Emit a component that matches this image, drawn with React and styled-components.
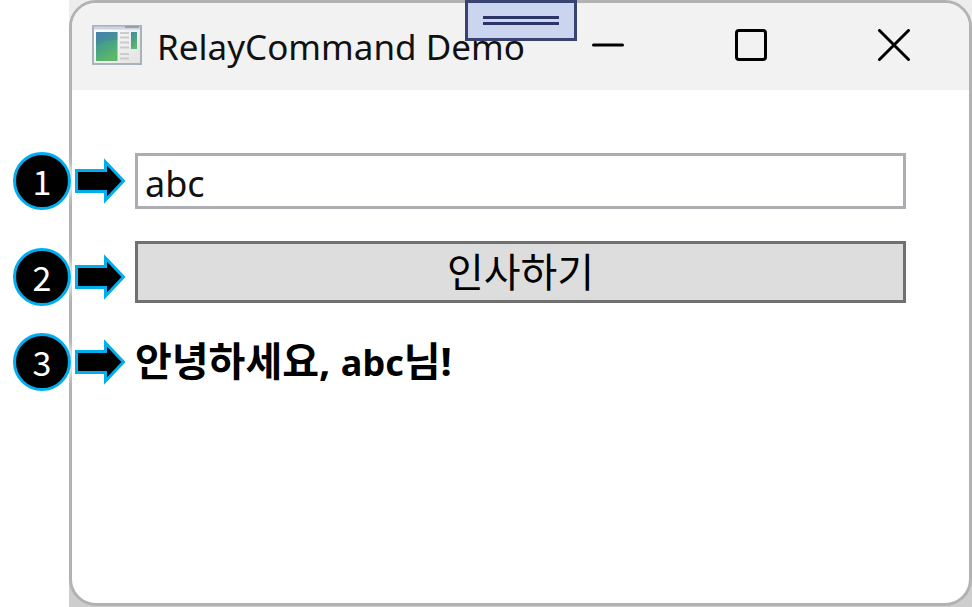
import React, { useState } from "react";
import styled, { createGlobalStyle } from "styled-components";

function App() {
  const [name, setName] = useState("abc");
  const [greeted, setGreeted] = useState("abc");

  return (
    <Desktop>
      <GlobalStyle />
      <Window>
        <TitleBar>
          <AppIcon />
          <Title>RelayCommand Demo</Title>
          <CaptionButton aria-label="Minimize">
            <svg width="32" height="32" viewBox="0 0 32 32">
              <path d="M1.5 16H30.5" />
            </svg>
          </CaptionButton>
          <CaptionButton aria-label="Maximize">
            <svg width="32" height="32" viewBox="0 0 32 32">
              <rect x="1.5" y="1.5" width="29" height="29" rx="2.5" />
            </svg>
          </CaptionButton>
          <CaptionButton aria-label="Close">
            <svg width="32" height="32" viewBox="0 0 32 32">
              <path d="M1.5 1.5L30.5 30.5M30.5 1.5L1.5 30.5" />
            </svg>
          </CaptionButton>
        </TitleBar>
        <DebugHandle aria-label="Debug toolbar">
          <HandleLine />
          <HandleLine />
        </DebugHandle>
        <Content>
          <Row>
            <Callout number={1} />
            <NameInput
              type="text"
              aria-label="이름"
              value={name}
              onChange={(e) => setName(e.target.value)}
            />
          </Row>
          <Row $space={10}>
            <Callout number={2} />
            <GreetButton onClick={() => setGreeted(name)}>인사하기</GreetButton>
          </Row>
          <Row>
            <Callout number={3} />
            <Greeting>
              안녕하세요, <GreetedName>{greeted}</GreetedName>님!
            </Greeting>
          </Row>
        </Content>
      </Window>
    </Desktop>
  );
}

function Callout({ number }) {
  return (
    <CalloutBox>
      <Badge>{number}</Badge>
      <svg width="51" height="46" viewBox="0 0 51 46">
        <path
          d="M1.5 12.5H30.5V4L48.5 23L30.5 42V33.5H1.5Z"
          fill="#000"
          stroke="#00aeef"
          strokeWidth="3"
        />
      </svg>
    </CalloutBox>
  );
}

function AppIcon() {
  return (
    <svg width="50" height="40" viewBox="0 0 50 40">
      <defs>
        <linearGradient id="pane" x1="0" y1="0" x2="0.4" y2="1">
          <stop offset="0" stopColor="#4b86a8" />
          <stop offset="0.5" stopColor="#45a088" />
          <stop offset="1" stopColor="#5cb768" />
        </linearGradient>
        <linearGradient id="paper" x1="0" y1="0" x2="1" y2="1">
          <stop offset="0" stopColor="#fff" />
          <stop offset="1" stopColor="#e2e2e2" />
        </linearGradient>
      </defs>
      <rect x="1" y="1" width="48" height="38" fill="url(#paper)" stroke="#a9b1ba" strokeWidth="2" />
      <path d="M2 3H48" stroke="#cbd4df" strokeWidth="3" />
      <path d="M33 2H47" stroke="#8793a1" strokeWidth="1.5" />
      <rect x="4" y="7" width="21.5" height="29" fill="url(#pane)" />
      <path d="M4 21Q12 14 25.5 15V7H4Z" fill="#4179b0" opacity="0.35" />
      <rect x="39" y="7" width="6" height="17" fill="url(#pane)" />
      <path
        d="M28 8H37M28 12.5H37M28 17.5H37M28 22.5H37M28 29H37M28 33.5H37"
        stroke="#cbcbcb"
        strokeWidth="2"
      />
    </svg>
  );
}

const GlobalStyle = createGlobalStyle`
  * {
    box-sizing: border-box;
  }

  body {
    margin: 0;
    background: #fff;
    color: #111;
    font-family: "Noto Sans", "Noto Sans CJK KR", sans-serif;
  }
`;

const Desktop = styled.div`
  min-height: 100vh;
  margin-left: 69px;
  padding-bottom: 1px;
  display: flex;
  background: linear-gradient(#ededed, #cdcdcd);
`;

const Window = styled.main`
  position: relative;
  flex: 1;
  border: 3px solid #b2b2b2;
  border-radius: 27px;
  background: #fff;
`;

const TitleBar = styled.header`
  height: 87px;
  display: flex;
  align-items: center;
  padding: 0 4px 3px 20px;
  border-radius: 24px 24px 0 0;
  background: #f2f2f2;
`;

const Title = styled.h1`
  flex: 1;
  margin: 0;
  padding: 4px 0 0 15px;
  font-size: 35px;
  font-weight: 400;
  line-height: 48px;
  white-space: nowrap;
`;

const CaptionButton = styled.button`
  width: 143px;
  height: 84px;
  flex: none;
  display: flex;
  align-items: center;
  justify-content: center;
  padding: 0;
  border: 0;
  background: none;

  svg {
    fill: none;
    stroke: #000;
    stroke-width: 3;
    stroke-linecap: round;
  }
`;

/* hangs from the top edge, over the title bar */
const DebugHandle = styled.button`
  position: absolute;
  top: -3px;
  left: 50%;
  transform: translateX(-50%);
  width: 112px;
  height: 41px;
  display: flex;
  flex-direction: column;
  align-items: center;
  justify-content: center;
  gap: 3px;
  padding: 0;
  border: 3px solid #39436f;
  background: #ccd5f0;
`;

const HandleLine = styled.span`
  width: 76px;
  height: 3px;
  background: #2b3566;
`;

const Content = styled.section`
  display: flex;
  flex-direction: column;
  gap: 32px;
  padding: 63px;
`;

const Row = styled.div`
  position: relative;
  display: flex;
  padding-bottom: ${(props) => props.$space || 0}px;
`;

/* sits left of its row, across the window edge */
const CalloutBox = styled.div`
  position: absolute;
  right: 100%;
  top: 50%;
  transform: translateY(-50%);
  display: flex;
  align-items: center;
  gap: 4px;
  margin-right: 9px;
`;

const Badge = styled.span`
  width: 58px;
  height: 58px;
  display: flex;
  align-items: center;
  justify-content: center;
  border: 3px solid #00aeef;
  border-radius: 50%;
  background: #000;
  box-shadow: 0 0 6px 2px #fff;
  color: #fff;
  font-family: "Noto Sans CJK KR", sans-serif;
  font-size: 34px;
  line-height: 40px;
`;

const NameInput = styled.input`
  width: 100%;
  height: 56px;
  padding: 4px 7px 0;
  border: 3px solid #abadb3;
  background: #fff;
  color: #111;
  font-family: inherit;
  font-size: 36px;
  outline: none;
`;

const GreetButton = styled.button`
  width: 100%;
  height: 62px;
  padding: 0;
  border: 3px solid #707070;
  background: #ddd;
  color: #000;
  font-family: inherit;
  font-size: 40px;
  line-height: 56px;
`;

const Greeting = styled.p`
  margin: 0;
  color: #000;
  font-size: 40px;
  font-weight: 700;
  line-height: 32px;
`;

const GreetedName = styled.span`
  font-size: 36px;
`;

export default App;
